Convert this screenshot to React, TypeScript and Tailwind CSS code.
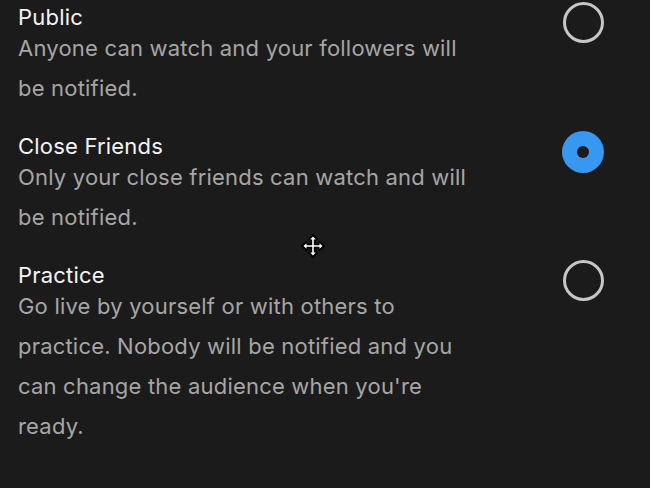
import React, { useState } from 'react';

type Audience = {
  id: string;
  title: string;
  description: string;
};

const audiences: Audience[] = [
  {
    id: 'public',
    title: 'Public',
    description: 'Anyone can watch and your followers will be notified.',
  },
  {
    id: 'close-friends',
    title: 'Close Friends',
    description: 'Only your close friends can watch and will be notified.',
  },
  {
    id: 'practice',
    title: 'Practice',
    description:
      "Go live by yourself or with others to practice. Nobody will be notified and you can change the audience when you're ready.",
  },
];

const Radio: React.FC<{ checked: boolean }> = ({ checked }) =>
  checked ? (
    <span className="flex h-[42px] w-[42px] shrink-0 items-center justify-center rounded-full bg-[#3897f0]">
      <span className="block h-[12px] w-[12px] rounded-full bg-[#1b1b1b]" />
    </span>
  ) : (
    <span className="block h-[41px] w-[41px] shrink-0 rounded-full border-[3.5px] border-[#c6c6c6]" />
  );

const MoveCursor: React.FC = () => (
  <svg width="26" height="26" viewBox="0 0 26 26" className="pointer-events-none absolute left-[300px] top-[233px]">
    <path
      d="M13 2 L17 6.5 L14.5 6.5 L14.5 11.5 L19.5 11.5 L19.5 9 L24 13 L19.5 17 L19.5 14.5 L14.5 14.5 L14.5 19.5 L17 19.5 L13 24 L9 19.5 L11.5 19.5 L11.5 14.5 L6.5 14.5 L6.5 17 L2 13 L6.5 9 L6.5 11.5 L11.5 11.5 L11.5 6.5 L9 6.5 Z"
      fill="#000"
      stroke="#000"
      strokeWidth="2"
      strokeLinejoin="round"
    />
    <path
      d="M13 3.5 L15.8 6.5 L13.8 6.5 L13.8 12.2 L19.5 12.2 L19.5 10.2 L22.5 13 L19.5 15.8 L19.5 13.8 L13.8 13.8 L13.8 19.5 L15.8 19.5 L13 22.5 L10.2 19.5 L12.2 19.5 L12.2 13.8 L6.5 13.8 L6.5 15.8 L3.5 13 L6.5 10.2 L6.5 12.2 L12.2 12.2 L12.2 6.5 L10.2 6.5 Z"
      fill="#fff"
    />
  </svg>
);

const App: React.FC = () => {
  const [selected, setSelected] = useState('close-friends');

  return (
    <div className="relative h-[488px] w-[650px] overflow-hidden bg-[#1b1b1b] font-['Inter','Liberation_Sans',Arial,sans-serif]">
      <div className="flex flex-col gap-[27px] pl-[18px] pr-[46px] pt-[6px]">
        {audiences.map((item) => (
          <div
            key={item.id}
            className="flex cursor-pointer items-start justify-between"
            onClick={() => setSelected(item.id)}
          >
            <div className="w-[462px]">
              <div className="text-[22px] leading-[22px] tracking-[0.2px] text-[#f4f4f4]">{item.title}</div>
              <p className="text-[22px] leading-[40px] tracking-[0.2px] text-[#a6a6a6]">{item.description}</p>
            </div>
            <div className="-mt-[4px]">
              <Radio checked={selected === item.id} />
            </div>
          </div>
        ))}
      </div>
      <MoveCursor />
    </div>
  );
};

export default App;
